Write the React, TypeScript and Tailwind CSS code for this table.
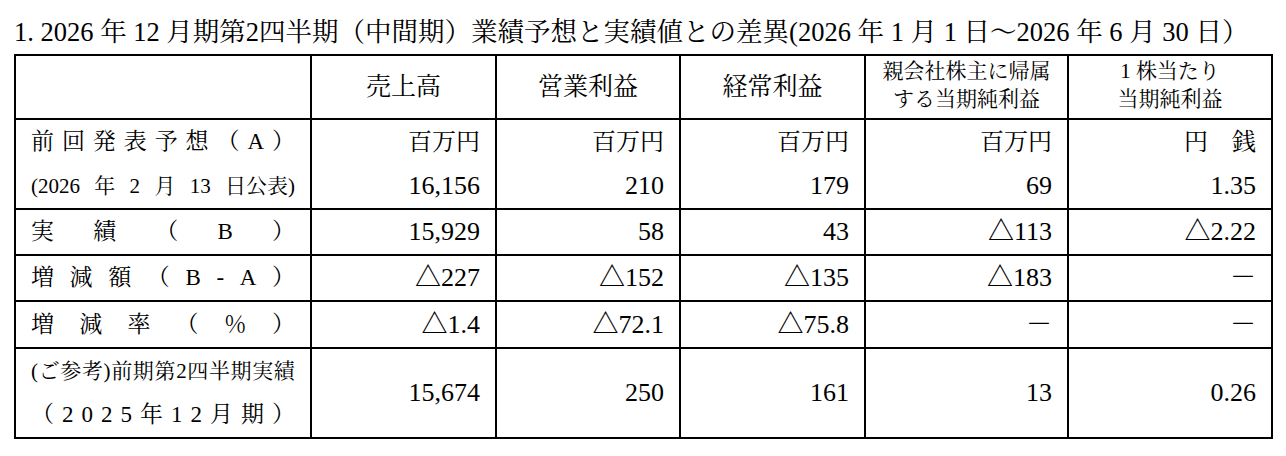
const serif = "font-['Liberation_Serif','Noto_Serif_CJK_JP','Noto_Sans_CJK_JP',serif]"

type Row = {
  label: string[][]
  values: string[][]
}

const rows: Row[] = [
  {
    label: [
      ['前', '回', '発', '表', '予', '想', '（', 'A', '）'],
      ['(2026', '年', '2', '月', '13', '日公表)'],
    ],
    values: [
      ['百万円', '16,156'],
      ['百万円', '210'],
      ['百万円', '179'],
      ['百万円', '69'],
      ['円　銭', '1.35'],
    ],
  },
  {
    label: [['実', '績', '（', 'B', '）']],
    values: [['15,929'], ['58'], ['43'], ['△113'], ['△2.22']],
  },
  {
    label: [['増', '減', '額', '（', 'B', '-', 'A', '）']],
    values: [['△227'], ['△152'], ['△135'], ['△183'], ['－']],
  },
  {
    label: [['増', '減', '率', '（', '％', '）']],
    values: [['△1.4'], ['△72.1'], ['△75.8'], ['－'], ['－']],
  },
  {
    label: [
      ['(', 'ご', '参', '考', ')', '前', '期', '第', '2', '四', '半', '期', '実', '績'],
      ['（', '2', '0', '2', '5', '年', '1', '2', '月', '期', '）'],
    ],
    values: [['15,674'], ['250'], ['161'], ['13'], ['0.26']],
  },
]

const rowHeights = ['h-[90px]', 'h-[46px]', 'h-[46px]', 'h-[47px]', 'h-[90px]']

function Spread({ parts, small }: { parts: string[]; small?: boolean }) {
  return (
    <div className={`flex justify-between leading-[44px] ${small ? 'text-[21px]' : 'text-[23px]'}`}>
      {parts.map((p, i) => (
        <span key={i}>{p}</span>
      ))}
    </div>
  )
}

function Value({ lines }: { lines: string[] }) {
  return (
    <div className="flex flex-col items-end">
      {lines.map((l, i) => {
        const isUnit = /[円銭]/.test(l)
        return (
          <div key={i} className={`leading-[44px] ${isUnit ? 'text-[24px]' : 'text-[26px]'}`}>
            {l}
          </div>
        )
      })}
    </div>
  )
}

export default function App() {
  return (
    <div className={`w-[1286px] h-[456px] bg-white text-black ${serif}`}>
      <div className="h-[54px] pt-[16px] pl-[14px] text-[26.5px] leading-[32px] whitespace-nowrap">
        1. 2026 年 12 月期第2四半期（中間期）業績予想と実績値との差異(2026 年 1 月 1 日～2026 年 6 月 30 日）
      </div>
      <table className="ml-[14px] w-[1257px] table-fixed border-collapse border-2 border-black">
        <thead>
          <tr className="h-[64px]">
            <th className="w-[296px] border-2 border-black" />
            <th className="w-[185px] border-2 border-black text-[25px] font-normal">売上高</th>
            <th className="w-[184px] border-2 border-black text-[25px] font-normal">営業利益</th>
            <th className="w-[185px] border-2 border-black text-[25px] font-normal">経常利益</th>
            <th className="w-[203px] border-2 border-black text-[21px] font-normal leading-[28px] pb-1">
              <div>親会社株主に帰属</div>
              <div>する当期純利益</div>
            </th>
            <th className="w-[204px] border-2 border-black text-[21px] font-normal leading-[28px] pb-1">
              <div>1 株当たり</div>
              <div>当期純利益</div>
            </th>
          </tr>
        </thead>
        <tbody>
          {rows.map((row, r) => (
            <tr key={r} className={rowHeights[r]}>
              <td className="border-2 border-black px-[15px]">
                {row.label.map((parts, i) => (
                  <Spread key={i} parts={parts} small={(r === 0 && i === 1) || (r === 4 && i === 0)} />
                ))}
              </td>
              {row.values.map((v, i) => (
                <td key={i} className="border-2 border-black pr-[15px]">
                  <Value lines={v} />
                </td>
              ))}
            </tr>
          ))}
        </tbody>
      </table>
    </div>
  )
}
